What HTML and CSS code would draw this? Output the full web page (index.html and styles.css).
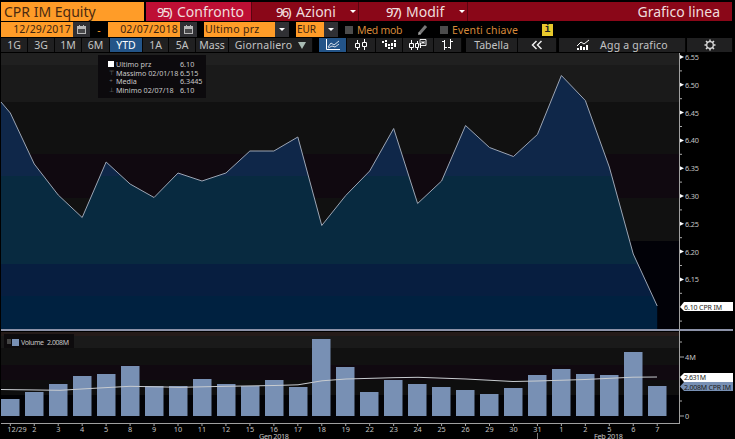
FILE: index.html
```html
<!DOCTYPE html>
<html lang="it">
<head>
    <meta charset="UTF-8">
    <meta name="viewport" content="width=device-width, initial-scale=1.0">
    <title>CPR IM Equity - Grafico linea</title>
    <link rel="stylesheet" href="styles.css">
</head>
<body>
    <div class="terminal">
        <!-- title bar -->
        <div class="title-bar">
            <div class="ticker">CPR IM Equity</div>
            <div class="menu menu-first"><b>95)</b><span>Confronto</span></div>
            <div class="menu menu-azioni"><b>96)</b><span>Azioni</span><i class="caret"></i></div>
            <div class="menu menu-modif"><b>97)</b><span>Modif</span><i class="caret"></i></div>
            <div class="page-name">Grafico linea</div>
        </div>
        <!-- dates, price field, currency -->
        <div class="fields">
            <div class="field date">12/29/2017</div>
            <div class="picker"><svg width="9" height="9"><path d="M0 1h2V0h1v1h3V0h1v1h2v8H0z" fill="#b8b8b8"/><path d="M1 4h7v4H1z" fill="#48484a"/></svg></div>
            <div class="dash">-</div>
            <div class="field date date-to">02/07/2018</div>
            <div class="picker picker-to"><svg width="9" height="9"><path d="M0 1h2V0h1v1h3V0h1v1h2v8H0z" fill="#b8b8b8"/><path d="M1 4h7v4H1z" fill="#48484a"/></svg></div>
            <div class="field price">Ultimo prz</div>
            <div class="drop"><i class="caret"></i></div>
            <div class="field currency">EUR</div>
            <div class="drop"><i class="caret"></i></div>
            <div class="check"></div>
            <div class="label med">Med mob</div>
            <svg class="pencil" width="12" height="12"><path d="M2 10L9 2" stroke="#777" stroke-width="3"/><path d="M1 11l1-3 2 2z" fill="#aaa"/></svg>
            <div class="check"></div>
            <div class="label eventi">Eventi chiave</div>
            <div class="info">i</div>
        </div>
        <!-- range and chart type -->
        <div class="tools">
            <div class="tool">1G</div>
            <div class="tool">3G</div>
            <div class="tool">1M</div>
            <div class="tool">6M</div>
            <div class="tool active">YTD</div>
            <div class="tool">1A</div>
            <div class="tool">5A</div>
            <div class="tool">Mass</div>
            <div class="tool period">Giornaliero <span class="arrow"></span></div>
            <div class="gap"></div>
            <div class="tool active"><svg width="16" height="12" fill="none" stroke="#fff"><path d="M1.500 0v10.500H15"/><path d="M3 8l3-4 3 2 5-4M3 9l4-2 3 1 4-3" stroke-width=".8"/></svg></div>
            <div class="tool"><svg width="14" height="12" fill="none" stroke="#fff"><path d="M3.500 1v3M3.500 8v3M1.500 4.500h4v4h-4zM10.500 0v3M10.500 8v3M8.500 3.500h4v4h-4z"/></svg></div>
            <div class="tool"><svg width="16" height="12" fill="#fff"><path d="M1 2h2v2H1zM4 1h2v2H4zM4 4h2v4H4zM7 5h2v2H7zM7 8h2v2H7zM10 4h2v3h-2zM10 8h2v2h-2zM13 1h2v2h-2zM13 4h2v4h-2z"/></svg></div>
            <div class="tool"><svg width="18" height="12" fill="none" stroke="#fff"><path d="M2.500 1v3M2.500 8v3M.5 4.500h4v4h-4zM8.500 2v2M8.500 9v2M6.500 4.500h3v4h-3zM11.500 4v5"/><path d="M11 .5h6v6h-6zM13 2v3M15 2v3M13 3.500h2" stroke-width=".9"/></svg></div>
            <div class="tool"><svg width="13" height="12" fill="none" stroke="#fff"><path d="M3.500 1v10M1 2.500h2M4 8.500h2M9.500 0v10M7 8.500h2M10 2.500h2"/></svg></div>
            <div class="gap"></div>
            <div class="tool">Tabella</div>
            <div class="tool"><svg width="12" height="10" fill="none" stroke="#eee" stroke-width="1.500"><path d="M5.500 1L1.500 5l4 4M10.500 1l-4 4 4 4"/></svg></div>
            <div class="gap"></div>
            <div class="tool add"><svg width="14" height="12" fill="none" stroke="#fff"><path d="M1 7l4-4 3 2 5-4"/><path d="M2 9v2M5 7v4M8 8v3M11 6v5" stroke-width="2"/></svg>Agg a grafico</div>
            <div class="gap"></div>
            <div class="tool"><svg width="12" height="12" fill="none" stroke="#ddd"><circle cx="6" cy="6" r="3.300" stroke-width="1.300"/><path d="M6 .5v2M6 9.500v2M.5 6h2M9.500 6h2M2 2l1.500 1.500M8.500 8.500L10 10M2 10l1.500-1.500M8.500 3.500L10 2" stroke-width="1.500"/></svg></div>
        </div>
        <!-- chart -->
        <div class="chart">
            <svg id="plot" width="735" height="387" viewBox="0 52 735 387">
                <defs>
                    <clipPath id="area"><path id="areaPath"/></clipPath>
                </defs>
                <g shape-rendering="crispEdges">
                    <rect x="1" y="53" width="679" height="12" fill="#202020"/>
                    <rect x="1" y="65" width="679" height="37" fill="#1a1a1a"/>
                    <rect x="1" y="102" width="679" height="52" fill="#111111"/>
                    <rect x="1" y="154" width="679" height="44" fill="#100910"/>
                    <rect x="1" y="198" width="679" height="43" fill="#111111"/>
                    <rect x="1" y="241" width="679" height="88" fill="#010107"/>
                    <rect x="1" y="332" width="679" height="4" fill="#251b19"/>
                    <rect x="1" y="336" width="679" height="12" fill="#1a1a1a"/>
                    <rect x="1" y="348" width="679" height="17" fill="#111111"/>
                    <rect x="1" y="365" width="679" height="15" fill="#100910"/>
                    <rect x="1" y="380" width="679" height="15" fill="#0e0e0e"/>
                    <rect x="1" y="395" width="679" height="28" fill="#020205"/>
                </g>
                <g clip-path="url(#area)">
                    <rect x="1" y="53" width="679" height="123" fill="#0f2749"/>
                    <rect x="1" y="176" width="679" height="88" fill="#082a40"/>
                    <rect x="1" y="264" width="679" height="32" fill="#071e40"/>
                    <rect x="1" y="296" width="679" height="33" fill="#002140"/>
                </g>
                <path id="line" class="price-line"/>
                <g id="bars" class="bars"></g>
                <path class="average" d="M1 389.500L60 390.300 90 388.500 130 386.300 180 387.300 226 386.300 274 385.500 298 384.800 322 380.800 346 379 394 377.700 418 377.300 466 379 513 381.500 537 381 585 379.500 633 377.200 657 377"/>
                <!-- axes -->
                <rect x="1" y="329" width="732" height="2" fill="#8c92a8"/>
                <rect x="1" y="423" width="679" height="1" fill="#a0a0a0"/>
                <rect x="679" y="53" width="1" height="371" fill="#a0a0a0"/>
                <g id="axis" class="axis"></g>
                <path d="M537.500 433v6" stroke="#777"/>
                <text class="axis-text" x="259" y="439" textLength="30">Gen 2018</text>
                <text class="axis-text" x="594" y="439" textLength="29">Feb 2018</text>
                <!-- last value flags -->
                <path d="M680 307l4-5h49v9h-49z" fill="#fff"/>
                <text class="flag" x="684" y="309.500" textLength="38">6.10 CPR IM</text>
                <path d="M680 377l4-4h49v9h-49z" fill="#fff"/>
                <text class="flag" x="684" y="380" textLength="22">2.631M</text>
                <path d="M680 386.500l4-4.500h49v9h-49z" fill="#7890b4"/>
                <text class="flag" x="684" y="389.500" textLength="47">2.008M CPR IM</text>
                <!-- volume legend -->
                <rect x="4" y="334" width="70" height="14" fill="#0d0b0d"/>
                <rect x="7" y="339" width="4" height="5" fill="#444"/>
                <rect x="12" y="339" width="7" height="7" fill="#7890b4"/>
                <text class="legend-text" x="21" y="345" textLength="23">Volume</text>
                <text class="legend-text" x="47" y="345" textLength="22">2.008M</text>
            </svg>
            <div class="legend">
                <i class="swatch"></i><span>Ultimo prz</span><span>6.10</span>
                <i>⊤</i><span>Massimo 02/01/18</span><span>6.515</span>
                <i>+</i><span>Media</span><span>6.3445</span>
                <i>⊥</i><span>Minimo 02/07/18</span><span>6.10</span>
            </div>
        </div>
    </div>
    <script>
    var days=['12/29','2','3','4','5','8','9','10','11','12','15','16','17','18','19','22','23','24','25','26','29','30','31','1','2','5','6','7'];
    var prices=[113,164,195,217.5,162,184,197.5,173,181,173,151,151,137,225.5,195.5,171,128.5,203.5,181,125.5,147.5,156.5,134.5,75.5,100.5,167,254,306];
    var volumes=[17,24,32,40,42,50,30,30,37,32,30,36,29,77,49,24,36,32,29,26,22,28,41,47,42,41,64,30];
    var step=23.96;
    var bars='';
    var axis='';
    var line='M1 102';
    for(var i=0;i<days.length;i++){
        var x=10.3+i*step;
        line+='L'+x+' '+prices[i];
        var left=Math.max(1,Math.round(x-9.3));
        bars+='<rect x="'+left+'" y="'+(416-volumes[i])+'" width="18.500" height="'+volumes[i]+'"/>';
        axis+='<path d="M'+x+' 424v2"/>';
        axis+='<text class="axis-text" text-anchor="middle" x="'+(i==0?17:x)+'" y="432">'+days[i]+'</text>';
    }
    // price scale, 0.05 between labels
    for(var j=0;j<10;j++){
        var y=57+j*27.8;
        if(j<9){
            axis+='<path class="tick" d="M680 '+(y-2)+'l4 2-4 2z"/>';
            axis+='<text class="axis-text" x="685" y="'+(y+3)+'" textLength="14">'+(6.55-j*0.05).toFixed(2)+'</text>';
        }
        axis+='<path d="M680 '+(y+13.9)+'h2"/>';
    }
    // volume scale
    axis+='<path d="M680 342h2M680 357h4M680 401h2M680 416h4"/>';
    axis+='<text class="axis-text" x="685" y="360">4M</text><text class="axis-text" x="685" y="419">0</text>';
    document.getElementById('line').setAttribute('d',line);
    document.getElementById('areaPath').setAttribute('d',line+'V329H1z');
    document.getElementById('bars').innerHTML=bars;
    document.getElementById('axis').innerHTML=axis;
    </script>
</body>
</html>
```
FILE: styles.css
```css
*{
    padding: 0;
    margin: 0;
    box-sizing: border-box;
}
body{
    background: #000;
    font-family: "Noto Sans", sans-serif;
    overflow: hidden;
}
.terminal{
    width: 735px;
    height: 439px;
}
svg{
    display: block;
    flex: none;
}
/* title bar */
.title-bar{
    display: flex;
    height: 21px;
    padding: 2px 3px 0 1px;
    font-size: 14px;
    line-height: 18px;
    white-space: nowrap;
}
.ticker{
    width: 143px;
    margin-right: 2px;
    padding-left: 3px;
    background: #ff9c28;
    color: #4a2a10;
    line-height: 20px;
}
.menu{
    display: flex;
    align-items: center;
    background: #8a0718;
    color: #f0dcdc;
    border-right: 1px solid #5c0410;
}
.menu b{
    width: 20px;
    font-weight: 500;
    font-size: 13px;
    letter-spacing: -1.7px;
}
.menu-first{
    width: 106px;
    padding-left: 11px;
    background: #be0f34;
}
.menu-azioni{
    width: 107px;
    padding-left: 24px;
}
.menu-modif{
    width: 109px;
    padding-left: 27px;
}
.caret{
    margin-left: auto;
    border: 3px solid transparent;
    border-top-color: #fff;
    border-bottom: 0;
}
.menu .caret{
    margin-right: 2px;
}
.page-name{
    flex: 1;
    padding-right: 12px;
    background: #8a0718;
    color: #f0dcdc;
    text-align: right;
    line-height: 20px;
}
/* fields */
.fields{
    display: flex;
    height: 17px;
    padding: 1px 0 1px 1px;
    font-size: 10.5px;
    line-height: 14px;
    white-space: nowrap;
    align-items: center;
}
.field{
    height: 15px;
    background: #ff9c28;
    color: #3c2410;
}
.date{
    width: 72px;
    padding-right: 2px;
    text-align: right;
    letter-spacing: .2px;
}
.picker, .drop{
    display: flex;
    align-items: center;
    justify-content: center;
    width: 17px;
    height: 15px;
    background: #303034;
}
.picker-to{
    margin-right: 7px;
}
.dash{
    width: 18px;
    text-align: center;
    color: #ff9c28;
}
.price{
    width: 71px;
    padding-left: 1px;
    letter-spacing: .3px;
}
.drop{
    width: 14px;
    margin-right: 7px;
}
.drop .caret{
    margin: 0;
}
.currency{
    width: 28px;
    padding-left: 1px;
    font-size: 10px;
}
.check{
    width: 8px;
    height: 8px;
    background: #4c4c4c;
}
.label{
    margin-left: 4px;
    color: #d6893a;
}
.med{
    width: 60px;
    letter-spacing: -.3px;
}
.pencil{
    margin-right: 11px;
}
.eventi{
    width: 90px;
    letter-spacing: .15px;
}
.info{
    width: 11px;
    height: 12px;
    background: #e8c92c;
    color: #222;
    font: bold 10px/12px "Liberation Mono", monospace;
    text-align: center;
}
/* toolbar */
.tools{
    display: grid;
    grid-template-columns: 27px 27px 27px 28px 33px 26px 27px 33px 84px 6px 28px 29px 27px 31px 28px 4px 52px 39px 2px 127px 1px 46px;
    height: 14px;
    padding-left: 1px;
    font-size: 10.5px;
    line-height: 13px;
    white-space: nowrap;
}
.tool{
    display: flex;
    align-items: center;
    justify-content: center;
    height: 14px;
    background: #202021;
    border-right: 1px solid #050505;
    color: #c4c4c4;
}
.tool.active{
    background: #235488;
    color: #fff;
}
.period{
    letter-spacing: .2px;
}
.arrow{
    margin-left: 6px;
    border: 4px solid transparent;
    border-top: 7px solid #a9bcb4;
    border-bottom: 0;
}
.add{
    letter-spacing: .2px;
}
.add svg{
    margin-right: 10px;
}
/* chart */
.chart{
    position: relative;
    height: 387px;
}
.price-line{
    fill: none;
    stroke: #9ca5b4;
    stroke-width: 1;
}
.bars{
    fill: #7890b4;
}
.average{
    fill: none;
    stroke: #c8ccd0;
    stroke-width: 1;
}
.axis path{
    stroke: #aaa;
    fill: none;
}
.axis .tick{
    fill: #fff;
    stroke: none;
}
.axis-text{
    fill: #c4c4c4;
    font-size: 7.3px;
}
.flag{
    fill: #1c1c20;
    font-size: 7px;
}
.legend-text{
    fill: #c4c4c4;
    font-size: 7px;
}
.legend{
    position: absolute;
    left: 98px;
    top: 3px;
    width: 108px;
    height: 43px;
    padding: 5px 0 0 8px;
    display: grid;
    grid-template-columns: 10px 64px 26px;
    grid-auto-rows: 8.7px;
    background: #0c0a0d;
    color: #c8c8c8;
    font-size: 7.2px;
    line-height: 9px;
    white-space: nowrap;
}
.legend i{
    color: #777;
    font-style: normal;
    font-size: 6px;
    text-align: center;
}
.legend .swatch{
    width: 6px;
    height: 6px;
    margin: 1px 0 0 2px;
    background: #fff;
}
```
